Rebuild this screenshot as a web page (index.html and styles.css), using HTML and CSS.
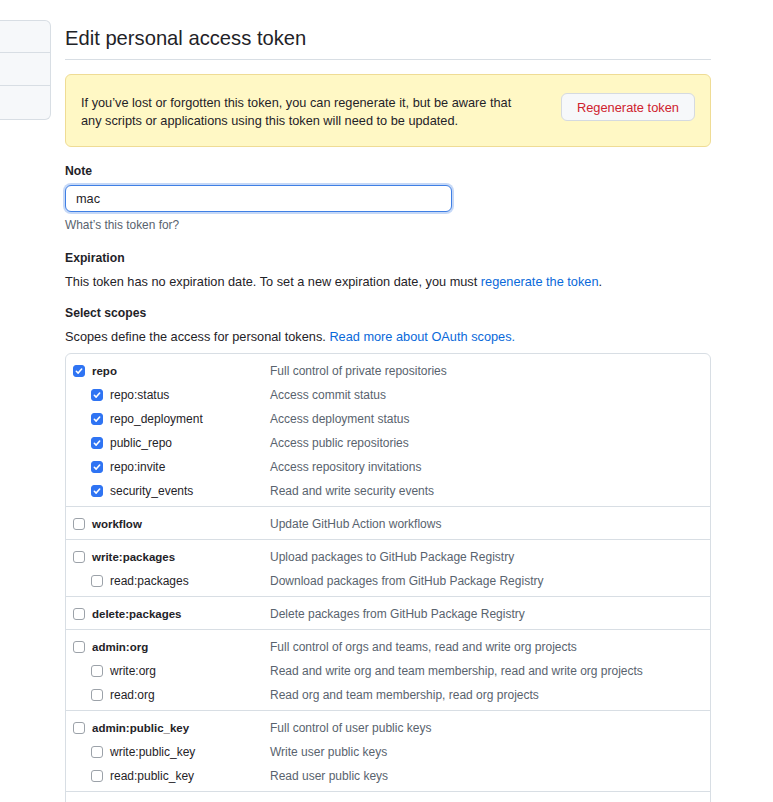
FILE: index.html
```html
<!DOCTYPE html>
<html lang="en">
<head>
<meta charset="utf-8">
<title>Edit personal access token</title>
<link rel="stylesheet" href="styles.css">
</head>
<body>
<div class="layout">
  <nav class="sidebar">
    <div class="side-item"></div>
    <div class="side-item"></div>
    <div class="side-item"></div>
  </nav>
  <main class="main">
    <h2 class="title">Edit personal access token</h2>

    <div class="flash">
      <p class="flash-text">If you’ve lost or forgotten this token, you can regenerate it, but be aware that any scripts or applications using this token will need to be updated.</p>
      <button class="btn-danger" type="button">Regenerate token</button>
    </div>

    <div class="field-label label-note">Note</div>
    <input class="note-input" type="text" value="mac">
    <div class="hint">What’s this token for?</div>

    <div class="field-label label-exp">Expiration</div>
    <p class="body-text">This token has no expiration date. To set a new expiration date, you must <a class="link" href="#">regenerate the token</a>.</p>

    <div class="field-label label-scopes">Select scopes</div>
    <p class="body-text">Scopes define the access for personal tokens. <a class="link" href="#">Read more about OAuth scopes.</a></p>

    <div class="scopes">
      <div class="group">
        <div class="row"><label class="scope parent"><span class="cb on"><svg viewBox="0 0 12 12"><path d="M2.8 6.3 L5 8.5 L9.2 3.6"/></svg></span>repo</label><span class="desc">Full control of private repositories</span></div>
        <div class="row child"><label class="scope"><span class="cb on"><svg viewBox="0 0 12 12"><path d="M2.8 6.3 L5 8.5 L9.2 3.6"/></svg></span>repo:status</label><span class="desc">Access commit status</span></div>
        <div class="row child"><label class="scope"><span class="cb on"><svg viewBox="0 0 12 12"><path d="M2.8 6.3 L5 8.5 L9.2 3.6"/></svg></span>repo_deployment</label><span class="desc">Access deployment status</span></div>
        <div class="row child"><label class="scope"><span class="cb on"><svg viewBox="0 0 12 12"><path d="M2.8 6.3 L5 8.5 L9.2 3.6"/></svg></span>public_repo</label><span class="desc">Access public repositories</span></div>
        <div class="row child"><label class="scope"><span class="cb on"><svg viewBox="0 0 12 12"><path d="M2.8 6.3 L5 8.5 L9.2 3.6"/></svg></span>repo:invite</label><span class="desc">Access repository invitations</span></div>
        <div class="row child"><label class="scope"><span class="cb on"><svg viewBox="0 0 12 12"><path d="M2.8 6.3 L5 8.5 L9.2 3.6"/></svg></span>security_events</label><span class="desc">Read and write security events</span></div>
      </div>
      <div class="group">
        <div class="row"><label class="scope parent"><span class="cb"></span>workflow</label><span class="desc">Update GitHub Action workflows</span></div>
      </div>
      <div class="group">
        <div class="row"><label class="scope parent"><span class="cb"></span>write:packages</label><span class="desc">Upload packages to GitHub Package Registry</span></div>
        <div class="row child"><label class="scope"><span class="cb"></span>read:packages</label><span class="desc">Download packages from GitHub Package Registry</span></div>
      </div>
      <div class="group">
        <div class="row"><label class="scope parent"><span class="cb"></span>delete:packages</label><span class="desc">Delete packages from GitHub Package Registry</span></div>
      </div>
      <div class="group">
        <div class="row"><label class="scope parent"><span class="cb"></span>admin:org</label><span class="desc">Full control of orgs and teams, read and write org projects</span></div>
        <div class="row child"><label class="scope"><span class="cb"></span>write:org</label><span class="desc">Read and write org and team membership, read and write org projects</span></div>
        <div class="row child"><label class="scope"><span class="cb"></span>read:org</label><span class="desc">Read org and team membership, read org projects</span></div>
      </div>
      <div class="group">
        <div class="row"><label class="scope parent"><span class="cb"></span>admin:public_key</label><span class="desc">Full control of user public keys</span></div>
        <div class="row child"><label class="scope"><span class="cb"></span>write:public_key</label><span class="desc">Write user public keys</span></div>
        <div class="row child"><label class="scope"><span class="cb"></span>read:public_key</label><span class="desc">Read user public keys</span></div>
      </div>
      <div class="group">
        <div class="row"><span class="scope parent"><span class="cb" aria-label="admin:repo_hook"></span></span></div>
      </div>
    </div>
  </main>
</div>
</body>
</html>
```
FILE: styles.css
```css
* { box-sizing: border-box; }

html, body { overflow: hidden; }

body {
  margin: 0;
  font-family: "Liberation Sans", Arial, Helvetica, sans-serif;
  color: #1f2328;
  background: #ffffff;
}

.layout {
  display: flex;
  align-items: flex-start;
  gap: 14px;
  padding-top: 20px;
}

.sidebar {
  width: 51px;
  flex: none;
  background: #f6f8fa;
  border: 1px solid #d8dee4;
  border-left: none;
  border-radius: 0 6px 6px 0;
}

.side-item {
  height: 33px;
  border-bottom: 1px solid #d8dee4;
}

.side-item:first-child { height: 32px; }
.side-item:last-child { border-bottom: none; }

.main {
  width: 646px;
  flex: none;
}

.title {
  margin: 0;
  padding: 3px 0 6px;
  font-size: 20.2px;
  font-weight: 400;
  line-height: 30px;
  color: #1f2328;
  border-bottom: 1px solid #d8dee4;
}

.flash {
  margin-top: 14px;
  display: flex;
  align-items: flex-start;
  padding: 19px 15px 16px;
  background: #fff8c5;
  border: 1px solid #efdc95;
  border-radius: 6px;
}

.flash-text {
  margin: 0;
  width: 444px;
  font-size: 12.75px;
  line-height: 18px;
}

.btn-danger {
  margin-left: auto;
  margin-top: -1px;
  height: 28px;
  padding: 0 15px;
  font-family: inherit;
  font-size: 12.85px;
  color: #cf222e;
  background: #f6f8fa;
  border: 1px solid #d5dae0;
  border-radius: 6px;
}

.field-label {
  font-size: 12.2px;
  font-weight: bold;
  line-height: 20px;
  margin-bottom: 4px;
}

.label-note { margin-top: 14px; }
.label-exp { margin-top: 14px; }
.label-scopes { margin-top: 11px; }

.note-input {
  display: block;
  width: 387px;
  height: 27px;
  padding: 0 10px;
  font-family: inherit;
  font-size: 12.75px;
  color: #1f2328;
  border: 1px solid #3f7fe4;
  border-radius: 6px;
  box-shadow: 0 0 0 2px rgba(63, 127, 228, 0.3);
  outline: none;
}

.hint {
  margin-top: 4px;
  font-size: 11.9px;
  line-height: 18px;
  color: #59636e;
}

.body-text {
  margin: 0;
  font-size: 12.75px;
  line-height: 20px;
}

.link {
  color: #0969da;
  text-decoration: none;
}

.scopes {
  margin-top: 6px;
  border: 1px solid #d8dee4;
  border-radius: 6px;
}

.group {
  padding: 5px 8px 3px 7px;
  border-top: 1px solid #d8dee4;
}

.group:first-child { border-top: none; }

.row {
  display: grid;
  grid-template-columns: 197px 1fr;
  align-items: center;
  height: 24px;
  font-size: 12px;
}

.scope {
  display: flex;
  align-items: center;
  gap: 7px;
}

.scope.parent {
  font-weight: bold;
  font-size: 11.5px;
}

.row.child .scope { padding-left: 18px; }

.desc {
  color: #59636e;
  white-space: nowrap;
}

.cb {
  flex: none;
  display: inline-flex;
  width: 12px;
  height: 12px;
  border: 1px solid #9ca2a9;
  border-radius: 3px;
  background: #ffffff;
}

.cb.on {
  background: #2f74f3;
  border-color: #2f74f3;
}

.cb svg {
  width: 10px;
  height: 10px;
  fill: none;
  stroke: #ffffff;
  stroke-width: 1.9;
  stroke-linecap: round;
  stroke-linejoin: round;
}
```
